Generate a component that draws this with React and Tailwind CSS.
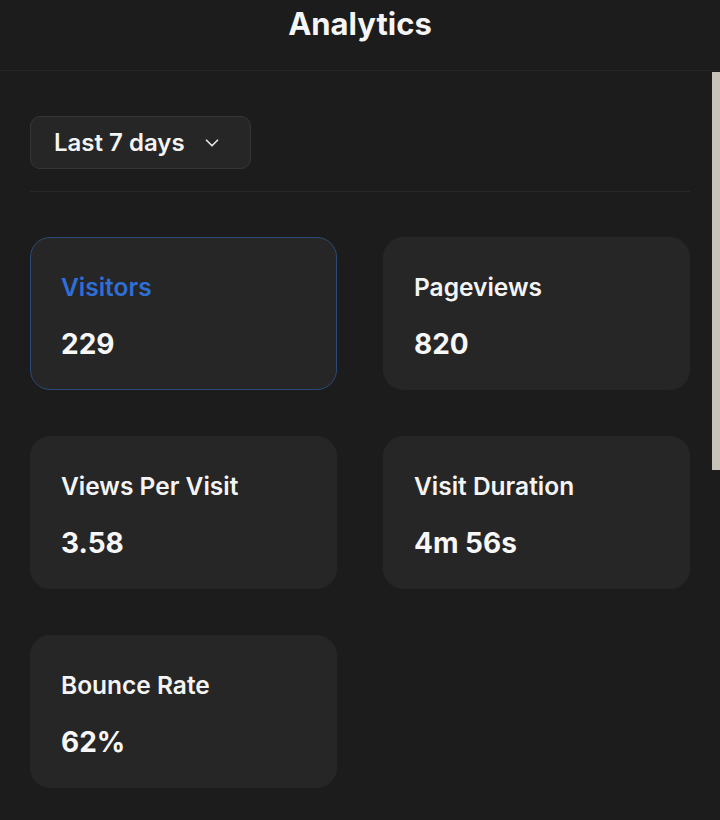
import { ChevronDown } from "lucide-react";

const stats = [
  { label: "Visitors", value: "229", active: true },
  { label: "Pageviews", value: "820" },
  { label: "Views Per Visit", value: "3.58" },
  { label: "Visit Duration", value: "4m 56s" },
  { label: "Bounce Rate", value: "62%" },
];

function StatCard({ label, value, active }) {
  return (
    <div
      className={`flex h-[153px] flex-col rounded-[20px] border bg-[#262626] px-[30px] pt-[31px] ${active ? "border-[#2c4a78]" : "border-[#262626]"}`}
    >
      <p className={`text-[24.5px] font-semibold leading-[36px] ${active ? "text-[#2f6fd6]" : "text-[#f4f4f4]"}`}>
        {label}
      </p>
      <p className="mt-[21px] text-[28px] font-bold leading-[36px] text-[#f7f7f7]">{value}</p>
    </div>
  );
}

export default function App() {
  return (
    <main className="relative h-[820px] overflow-hidden bg-[#1c1c1c] font-['Inter',sans-serif]">
      <header className="flex h-[71px] justify-center border-b border-[#272727] pt-[4px]">
        <h1 className="text-[31px] font-bold leading-[40px] text-[#f5f5f5]">Analytics</h1>
      </header>

      <div className="absolute right-0 top-[72px] h-[398px] w-[8px] bg-[#c7c3bb]" />

      <section className="px-[30px] pt-[45px]">
        <button
          type="button"
          className="flex h-[53px] w-[221px] items-center gap-[16px] rounded-[10px] border border-[#363636] bg-[#262626] pl-[23px] text-[24px] font-semibold text-[#f4f4f4]"
        >
          Last 7 days
          <ChevronDown className="size-[22px] text-[#e8e8e8]" strokeWidth={1.8} />
        </button>

        <div className="mt-[22px] border-t border-[#272727]" />

        <div className="mt-[45px] grid grid-cols-2 gap-x-[46px] gap-y-[46px]">
          {stats.map((s) => (
            <StatCard key={s.label} {...s} />
          ))}
        </div>
      </section>
    </main>
  );
}
